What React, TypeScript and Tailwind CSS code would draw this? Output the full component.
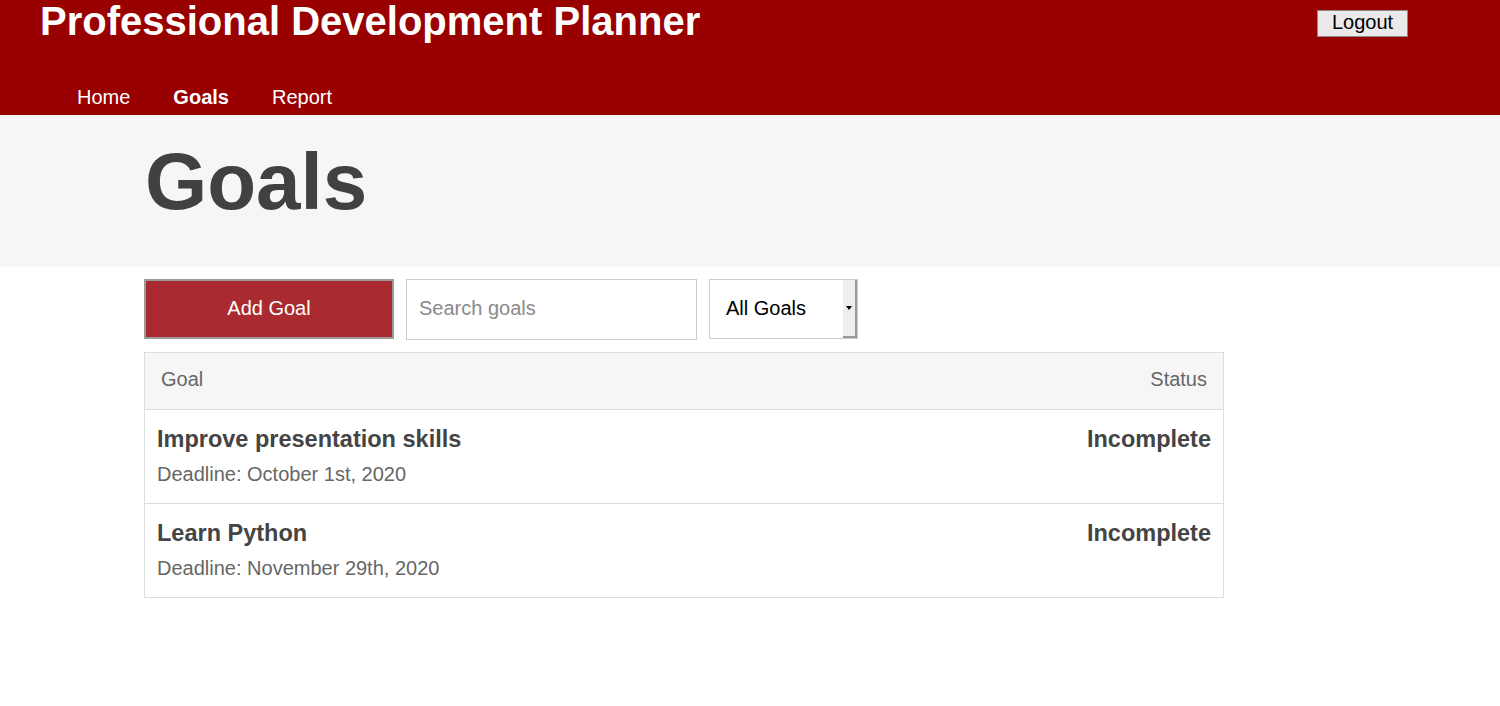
import React from "react";

const goals = [
  { title: "Improve presentation skills", deadline: "October 1st, 2020", status: "Incomplete" },
  { title: "Learn Python", deadline: "November 29th, 2020", status: "Incomplete" },
];

export default function App() {
  return (
    <div className="min-h-[706px] bg-white font-['Liberation_Sans',Arial,sans-serif]">
      {/* header */}
      <header className="h-[115px] bg-[#990000] text-white">
        <div className="flex items-start justify-between pl-[40px] pr-[92px]">
          <h1 className="text-[40px] font-bold leading-[42px]">Professional Development Planner</h1>
          <button className="mt-[10px] h-[27px] w-[91px] border border-[#8a8a8a] bg-[#ebe9e9] pb-[3px] text-[20px] leading-none text-black">
            Logout
          </button>
        </div>
        <nav className="mt-[43px] flex gap-[43px] pl-[77px] text-[20px] leading-[24px]">
          <a>Home</a>
          <a className="font-bold">Goals</a>
          <a>Report</a>
        </nav>
      </header>

      {/* title band */}
      <div className="h-[152px] bg-[#f6f6f6] pl-[145px] pt-[19px]">
        <h2 className="text-[80px] font-bold leading-[96px] text-[#414141]">Goals</h2>
      </div>

      <div className="pl-[144px] pt-[12px]">
        <div className="flex gap-[12px]">
          <button className="h-[60px] w-[250px] border-2 border-[#9a9a9a] bg-[#aa2b2f] pb-[2px] text-[20px] text-white">
            Add Goal
          </button>
          <input
            placeholder="Search goals"
            className="h-[61px] w-[291px] border border-[#cccccc] px-[12px] pb-[2px] text-[20px] placeholder:text-[#8a8a8a] outline-none"
          />
          <div className="flex h-[60px] w-[149px] border border-[#cccccc]">
            <div className="flex flex-1 items-center pb-[2px] pl-[16px] text-[20px] text-black">All Goals</div>
            <div className="flex w-[14px] items-center justify-center border-b-2 border-r-2 border-[#9a9a9a] bg-[#eeeeee]">
              <span className="h-0 w-0 border-x-[3px] border-t-[4px] border-x-transparent border-t-black" />
            </div>
          </div>
        </div>

        <div className="mt-[12px] w-[1080px] border border-[#dddddd]">
          <div className="flex h-[57px] items-center justify-between border-b border-[#dddddd] bg-[#f6f6f6] px-[16px] pb-[4px] text-[20px] text-[#666666]">
            <span>Goal</span>
            <span>Status</span>
          </div>
          {goals.map((g, i) => (
            <div
              key={i}
              className={
                "flex justify-between px-[12px] pt-[16px] " +
                (i < goals.length - 1 ? "h-[94px] border-b border-[#dddddd]" : "h-[93px]")
              }
            >
              <div>
                <div className="text-[23.5px] font-bold leading-[26px] text-[#444444]">{g.title}</div>
                <div className="mt-[10px] text-[20px] leading-[24px] text-[#666666]">Deadline: {g.deadline}</div>
              </div>
              <div className="text-[23.5px] font-bold leading-[26px] text-[#444444]">{g.status}</div>
            </div>
          ))}
        </div>
      </div>
    </div>
  );
}
